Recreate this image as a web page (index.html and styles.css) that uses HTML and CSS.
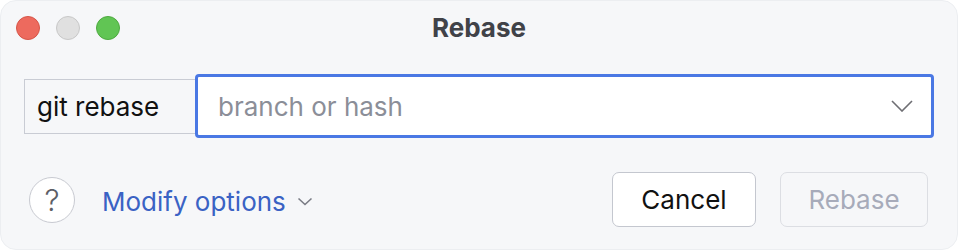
FILE: index.html
```html
<!DOCTYPE html>
<html>
<head>
<meta charset="utf-8">
<link rel="stylesheet" href="styles.css">
</head>
<body>
<div class="window">
  <div class="titlebar">
    <div class="lights">
      <span class="light red"></span>
      <span class="light gray"></span>
      <span class="light green"></span>
    </div>
    <div class="title">Rebase</div>
  </div>
  <div class="row">
    <div class="prefix">git rebase</div>
    <div class="combo">
      <span class="placeholder">branch or hash</span>
      <svg class="chev" width="22" height="12" viewBox="0 0 22 12"><path d="M1 1 L11 11 L21 1" fill="none" stroke="#6e6e73" stroke-width="1.6"/></svg>
    </div>
  </div>
  <div class="footer">
    <div class="help">?</div>
    <div class="modify">Modify options
      <svg class="small-chev" width="16" height="9" viewBox="0 0 16 9"><path d="M1.5 1.5 L8 7.5 L14.5 1.5" fill="none" stroke="#7a7c85" stroke-width="1.6"/></svg>
    </div>
    <div class="spacer"></div>
    <div class="btn cancel">Cancel</div>
    <div class="btn disabled">Rebase</div>
  </div>
</div>
</body>
</html>
```
FILE: styles.css
```css
html, body {
  margin: 0;
  padding: 0;
  background: #ffffff;
}
body {
  font-family: Inter, "Noto Sans", sans-serif;
  width: 958px;
  height: 250px;
  overflow: hidden;
}
.window {
  box-sizing: border-box;
  width: 958px;
  height: 250px;
  background: #f6f7f9;
  border-radius: 16px;
  border: 1px solid #eceef1;
  position: relative;
}
.titlebar {
  height: 54px;
  display: flex;
  align-items: center;
  justify-content: center;
  position: relative;
}
.lights {
  position: absolute;
  left: 15px;
  top: 15px;
  display: flex;
  gap: 16px;
}
.light {
  box-sizing: border-box;
  width: 24px;
  height: 24px;
  border-radius: 50%;
  display: block;
}
.red { background: #ed6a5e; border: 1px solid #d65548; }
.gray { background: #e0e0e0; border: 1px solid #c8c8c8; }
.green { background: #61c554; border: 1px solid #4eaa40; }
.title {
  font-size: 26px;
  font-weight: 700;
  color: #404248;
  margin-top: -2px;
}
.row {
  display: flex;
  align-items: center;
  padding: 19px 0 0 23px;
}
.prefix {
  box-sizing: border-box;
  height: 55px;
  width: 171px;
  border: 1px solid #c9ccd4;
  border-right: none;
  display: flex;
  align-items: center;
  padding-left: 12px;
  font-size: 26px;
  color: #111;
}
.combo {
  box-sizing: border-box;
  width: 739px;
  height: 64px;
  border: 3px solid #4a78e4;
  border-radius: 4px;
  background: #fff;
  display: flex;
  align-items: center;
  padding: 0 18px 0 20px;
  justify-content: space-between;
}
.placeholder {
  font-size: 26px;
  color: #8b8e98;
}
.chev { display: block; }
.footer {
  display: flex;
  align-items: center;
  padding: 34px 29px 0 28px;
}
.help {
  box-sizing: border-box;
  width: 46px;
  height: 46px;
  border-radius: 50%;
  border: 1.5px solid #c8cad1;
  background: #fff;
  display: flex;
  align-items: center;
  justify-content: center;
  font-size: 30px;
  font-weight: 300;
  color: #5c5e66;
}
.modify {
  margin-left: 27px;
  margin-top: 3px;
  font-size: 26px;
  color: #3a62c4;
  display: flex;
  align-items: center;
}
.small-chev { margin-left: 11px; margin-top: 0px; }
.spacer { flex: 1; }
.btn {
  box-sizing: border-box;
  height: 55px;
  border-radius: 7px;
  display: flex;
  align-items: center;
  justify-content: center;
  font-size: 26px;
}
.cancel {
  width: 144px;
  background: #fff;
  border: 1.5px solid #c4c7cf;
  color: #111;
}
.disabled {
  width: 148px;
  margin-left: 24px;
  border: 1.5px solid #dcdee3;
  color: #a7abba;
}
```
